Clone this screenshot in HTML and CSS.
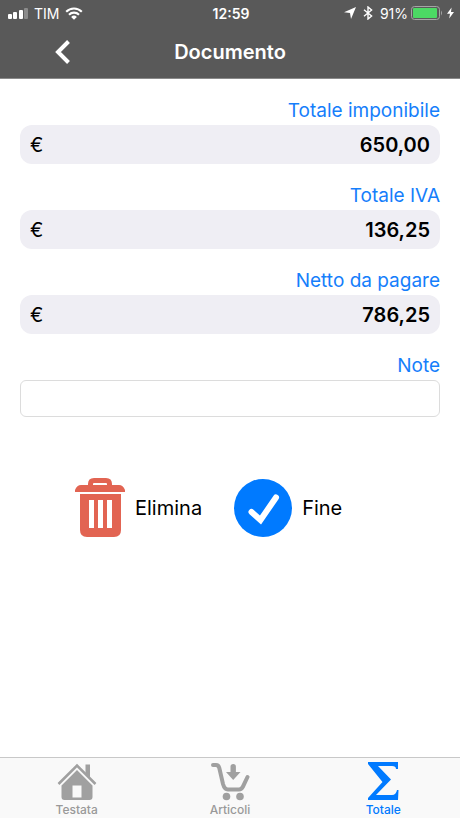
FILE: index.html
```html
<!DOCTYPE html>
<html lang="it">
<head>
  <meta charset="UTF-8">
  <meta name="viewport" content="width=device-width, initial-scale=1.0">
  <title>Documento</title>
  <link rel="stylesheet" href="styles.css">
</head>
<body>
  <header class="header">
    <div class="status-bar">
      <div class="status-left">
        <svg class="signal" width="20" height="12" viewBox="0 0 20 12" fill="#fff">
          <rect x="0" y="7" width="4" height="5" rx="1"/>
          <rect x="5" y="5" width="4" height="7" rx="1"/>
          <rect x="11" y="3" width="4" height="9" rx="1"/>
          <rect x="16" y="1" width="4" height="11" rx="1" opacity=".3"/>
        </svg>
        <span>TIM</span>
        <svg width="18" height="13" viewBox="0 0 18 13">
          <path d="M1.2 4.8a11 11 0 0 1 15.6 0M4 7.7a7 7 0 0 1 10 0" fill="none" stroke="#fff" stroke-width="2.1"/>
          <path d="M9 12.8 6.1 9.9a4.1 4.1 0 0 1 5.8 0z" fill="#fff"/>
        </svg>
      </div>
      <span class="clock">12:59</span>
      <div class="status-right">
        <svg width="12" height="12" viewBox="0 0 12 12">
          <path d="M12 0 7 12 6 6 0 5.300z" fill="#fff"/>
        </svg>
        <svg class="bluetooth" width="10" height="14" viewBox="0 0 10 14">
          <path d="M1 3.800 8.600 10 5 13V1l3.600 3L1 10.200" fill="none" stroke="#fff" stroke-width="1.400"/>
        </svg>
        <span>91%</span>
        <svg width="33" height="14" viewBox="0 0 33 14">
          <rect x=".5" y=".5" width="28" height="13" rx="3" fill="none" stroke="#a5a5a5"/>
          <rect x="2" y="2" width="24" height="10" rx="1" fill="#4cd964"/>
          <path d="M30 4.500q2 2.500 0 5z" fill="#a5a5a5"/>
        </svg>
        <svg width="7" height="12" viewBox="0 0 7 12">
          <path d="M4.600.5 0 6.800h3L2.200 11.500 7 5H4z" fill="#fff"/>
        </svg>
      </div>
    </div>
    <div class="nav-bar">
      <button type="button" class="back" aria-label="Indietro">
        <svg width="18" height="26" viewBox="0 0 18 26">
          <path d="M14.500 2.500 4 13l10.500 10.500" fill="none" stroke="#fff" stroke-width="4"/>
        </svg>
      </button>
      <h1>Documento</h1>
    </div>
  </header>

  <main class="content">
    <form id="totali" class="totals">
      <div class="field">
        <label for="imponibile">Totale imponibile</label>
        <div class="amount">
          <span>€</span>
          <input type="text" id="imponibile" value="650,00" readonly>
        </div>
      </div>
      <div class="field">
        <label for="iva">Totale IVA</label>
        <div class="amount">
          <span>€</span>
          <input type="text" id="iva" value="136,25" readonly>
        </div>
      </div>
      <div class="field">
        <label for="netto">Netto da pagare</label>
        <div class="amount">
          <span>€</span>
          <input type="text" id="netto" value="786,25" readonly>
        </div>
      </div>
      <div class="field">
        <label for="note">Note</label>
        <input type="text" id="note" class="note">
      </div>
    </form>

    <div class="actions">
      <button type="button" class="action">
        <svg width="50" height="60" viewBox="0 0 50 60">
          <path d="M13 7V6q0-6 6-6h12q6 0 6 6v1h7q4 0 6 5v2H0v-2q2-5 6-5zM18 7h14V6q0-1-1-1H19q-1 0-1 1z" fill="#e26452" fill-rule="evenodd"/>
          <path d="M5 16h41v36q0 7-7 7H12q-7 0-7-7zM14 22v28h5V22zM23 22v28h5V22zM32 22v28h5V22z" fill="#e26452" fill-rule="evenodd"/>
        </svg>
        Elimina
      </button>
      <button type="button" class="action">
        <svg width="58" height="60" viewBox="0 0 58 60">
          <circle cx="29" cy="30" r="29" fill="#007aff"/>
          <path d="M17.500 34 26.500 42 42 19.500" fill="none" stroke="#fff" stroke-width="6" stroke-linecap="round"/>
        </svg>
        Fine
      </button>
    </div>
  </main>

  <nav class="tab-bar">
    <a href="#testata" class="tab">
      <svg width="40" height="40" viewBox="0 0 40 40">
        <path d="M28.500 2.500H33V17l-4.500-4.500z" fill="#a0a0a0"/>
        <path d="M1.500 22 20 3.500 38.500 22" fill="none" stroke="#a0a0a0" stroke-width="2.500"/>
        <path d="M20 8 35.500 23.500V35q0 3-3 3H7.500q-3 0-3-3V23.500zM15.500 23.500V35.500h9V23.500z" fill="#a0a0a0" fill-rule="evenodd"/>
      </svg>
      <span>Testata</span>
    </a>
    <a href="#articoli" class="tab">
      <svg width="40" height="40" viewBox="0 0 40 40">
        <path d="M3 3h3q2.500 0 3.300 3L13 22q1.500 5.500 5 5.500h11q2.500 0 4-3L37.500 15" fill="none" stroke="#a0a0a0" stroke-width="4" stroke-linecap="round" stroke-linejoin="round"/>
        <path d="M20.500 4.500q0-2.500 2.700-2.500t2.700 2.500V10H30.500l-7.300 8-7.200-8h4.500z" fill="#a0a0a0"/>
        <circle cx="16.500" cy="34.500" r="3.800" fill="#a0a0a0"/>
        <circle cx="30" cy="34.500" r="3.800" fill="#a0a0a0"/>
      </svg>
      <span>Articoli</span>
    </a>
    <a href="#totale" class="tab active">
      <svg width="40" height="40" viewBox="0 0 40 40">
        <path d="M5 0h30v7h-2q0-3-4-3H15L28 17.500 13 33h16q4 0 5-5h1.500L35 38H5v-2L19.500 20 5 2z" fill="#007aff"/>
      </svg>
      <span>Totale</span>
    </a>
  </nav>
</body>
</html>
```

FILE: styles.css
```css
* {
  box-sizing: border-box;
}
body {
  margin: 0;
  min-height: 100vh;
  display: flex;
  flex-direction: column;
  font-family: Inter, "Liberation Sans", sans-serif;
  background: #fff;
  color: #000;
}
svg {
  display: block;
  flex-shrink: 0;
}
button {
  padding: 0;
  border: none;
  background: none;
  font: inherit;
  color: inherit;
  cursor: pointer;
}

/* header */
.header {
  background: #595959;
  color: #fff;
  border-bottom: 1px solid #8a8a8a;
}
.status-bar {
  display: grid;
  grid-template-columns: 1fr auto 1fr;
  align-items: center;
  height: 26px;
  padding: 0 6px 0 8px;
  font-size: 14px;
}
.status-left,
.status-right {
  display: flex;
  align-items: center;
  gap: 6px;
}
.status-right {
  justify-content: flex-end;
  gap: 3px;
}
.bluetooth {
  margin: 0 4px;
}
.clock {
  font-weight: 600;
}
.nav-bar {
  display: grid;
  grid-template-columns: 1fr auto 1fr;
  align-items: center;
  height: 52px;
}
.back {
  justify-self: start;
  margin-left: 54px;
}
h1 {
  margin: 0;
  font-size: 20px;
  font-weight: 600;
}

/* totals */
.content {
  flex: 1;
  padding: 20px;
}
.totals {
  display: flex;
  flex-direction: column;
  gap: 20px;
}
.field {
  display: flex;
  flex-direction: column;
  gap: 2px;
  font-size: 19px;
}
.field label {
  text-align: right;
  line-height: 24px;
  color: #157efb;
}
.amount {
  display: flex;
  align-items: center;
  height: 39px;
  padding: 0 10px;
  border-radius: 12px;
  background: #efeef4;
  font-size: 20px;
}
.amount input {
  flex: 1;
  min-width: 0;
  padding: 0;
  border: none;
  background: none;
  font: inherit;
  font-weight: 600;
  text-align: right;
}
.note {
  width: 100%;
  height: 37px;
  padding: 0 10px;
  border: 1px solid #dcdcdc;
  border-radius: 6px;
  font: inherit;
}

/* actions */
.actions {
  display: flex;
  gap: 32px;
  margin-top: 61px;
  padding-left: 55px;
}
.action {
  display: flex;
  align-items: center;
  gap: 10px;
  font-size: 20px;
}

/* tab bar */
.tab-bar {
  display: grid;
  grid-template-columns: repeat(3, 1fr);
  padding: 4px 0 1px;
  border-top: 1px solid #c8c8c8;
  background: #f9f9f9;
}
.tab {
  display: flex;
  flex-direction: column;
  align-items: center;
  font-size: 12px;
  font-weight: 500;
  line-height: 15px;
  color: #999;
  text-decoration: none;
}
.tab.active {
  color: #007aff;
}
```
